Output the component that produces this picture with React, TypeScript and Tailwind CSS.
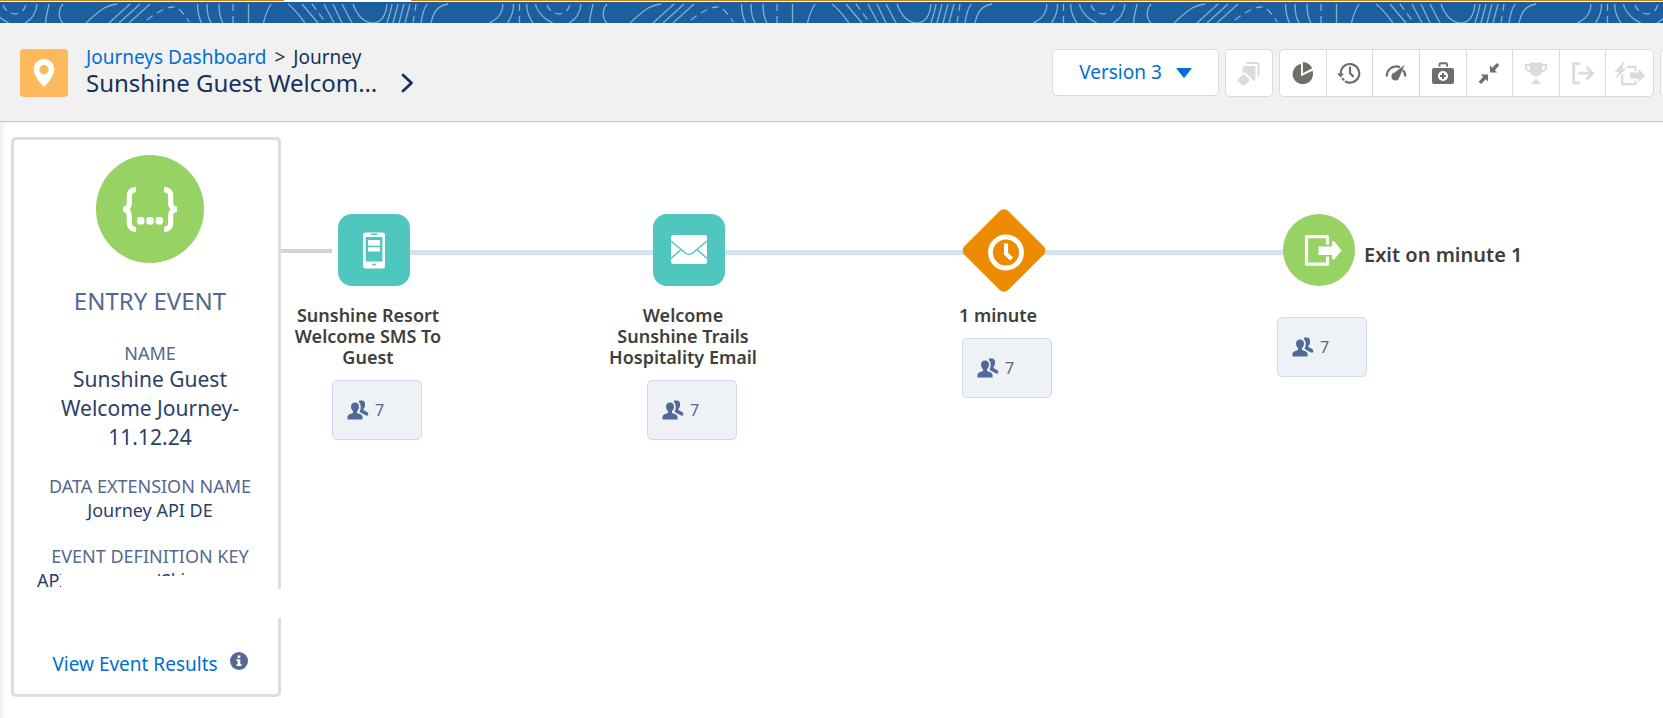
import type { ReactNode } from "react";

const contourLines = [
  "M2 4C2 12 -3 19 -12 23",
  "M546 4C546 12 541 19 532 23",
  "M12.5 4C12.5 12 10 18 6.5 23",
  "M25.5 4C26 12 28 18 32 23",
  "M34.5 4C36 12 44 20 52 23",
  "M80 4C79 14 74 20 68 23",
  "M92 4C91 10 89 15 88.500 23",
  "M106 4C101 10 101 18 106 23",
  "M160 4C150 5 145 8 129 23",
  "M173 4L152 23",
  "M183 4L162 23",
  "M193 4L172 23",
  "M240.500 4C240.500 12 242 18 244.500 23",
  "M250 4C250 12 251 18 254 23",
  "M262 4C262 12 263 18 266 23",
  "M291.500 4V23",
  "M314 4C310 10 308 16 306.500 23",
  "M331 4C338 9 342 15 348 23",
  "M345 4C350 10 355 16 361 23",
  "M367 4L377 23",
  "M376 4L385 23",
  "M385 4L395 23",
  "M396 4C400 16 408 23 415 23C425 23 429 14 430 4",
  "M435 4C434 12 431 18 430 23",
  "M441 4L436 23",
  "M447 4L442 23",
  "M453 4L448 23",
  "M470 4C466 10 465 16 464 23",
  "M491 4C479 6 476 14 474 23",
];

const dashedContours = [
  "M18.500 4V23",
  "M46 5C50 16 66 18 69 4",
  "M190 20C200 12 210 7 216 7C222 7 227 14 232 22",
  "M276 4V23",
  "M355 4L369 23",
  "M459 4L456 23",
];

function ContourBand() {
  return (
    <div className="h-[21px] bg-[#1b5f9f]">
      <svg className="block h-full w-full" aria-hidden="true">
        <defs>
          <pattern
            id="contours"
            width="544"
            height="23"
            patternUnits="userSpaceOnUse"
            patternTransform="translate(-43 -2)"
          >
            <g fill="none" stroke="#86adcf" strokeWidth="1.300">
              {contourLines.map((d) => (
                <path key={d} d={d} />
              ))}
              {dashedContours.map((d) => (
                <path key={d} d={d} strokeDasharray="7 5" />
              ))}
            </g>
          </pattern>
        </defs>
        <rect width="100%" height="100%" fill="url(#contours)" />
      </svg>
    </div>
  );
}

function ToolIcon({ children }: { children: ReactNode }) {
  return (
    <svg width="24" height="24" viewBox="0 0 24 24" fill="currentColor" aria-hidden="true">
      {children}
    </svg>
  );
}

const tools = [
  {
    label: "Journey analytics",
    disabled: false,
    icon: (
      <ToolIcon>
        <path d="M10 3A10.200 10.200 0 1 0 21.500 9.800L10 15.300Z" />
        <path d="M11.900 1A11 11 0 0 1 21.200 7.200L11.900 12.300Z" />
      </ToolIcon>
    ),
  },
  {
    label: "History",
    disabled: false,
    icon: (
      <ToolIcon>
        <path
          d="M3.700 13.500A9.300 9.300 0 1 1 8 20.200"
          fill="none"
          stroke="currentColor"
          strokeWidth="2.200"
        />
        <path d="M0.200 12.500H7L3.700 16.500Z" />
        <path d="M4.200 17.600L6 16.400L7.800 18.800L6.200 20Z" />
        <path
          d="M13 6.500V12L16 15.300"
          fill="none"
          stroke="currentColor"
          strokeWidth="2.200"
          strokeLinecap="round"
        />
      </ToolIcon>
    ),
  },
  {
    label: "Goal meter",
    disabled: false,
    icon: (
      <ToolIcon>
        <path
          d="M2.800 15.500A9.400 9.400 0 0 1 16 6.200M19 9A9.400 9.400 0 0 1 21.300 15.500"
          fill="none"
          stroke="currentColor"
          strokeWidth="2.300"
        />
        <path d="M20.600 3.800L15.300 16.500A4 4 0 1 1 10.800 11.500Z" />
      </ToolIcon>
    ),
  },
  {
    label: "Journey health",
    disabled: false,
    icon: (
      <ToolIcon>
        <path
          d="M8.500 5.500V3.500Q8.500 2.200 9.800 2.200H14.700Q16 2.200 16 3.500V5.500"
          fill="none"
          stroke="currentColor"
          strokeWidth="2"
        />
        <rect x="1" y="7" width="22" height="16" rx="2" />
        <circle cx="12" cy="15" r="5" fill="#fff" />
        <path d="M11 12H13V14H15V16H13V18H11V16H9V14H11Z" />
      </ToolIcon>
    ),
  },
  {
    label: "Zoom to fit",
    disabled: false,
    icon: (
      <ToolIcon>
        <path d="M13 4.500L15.200 6.700L20 2L22.300 4.300L17.800 9.200L20.200 11.600H13Z" />
        <path d="M11 20.500L8.800 18.300L4 23L1.700 20.700L6.200 15.800L3.800 13.400H11Z" />
      </ToolIcon>
    ),
  },
  {
    label: "Goals",
    disabled: true,
    icon: (
      <ToolIcon>
        <path d="M6 1.500H18V9Q18 14.500 12 15.500Q6 14.500 6 9Z" />
        <path
          d="M6 4H2V6Q2 10 7 10.500M18 4H22V6Q22 10 17 10.500"
          fill="none"
          stroke="currentColor"
          strokeWidth="2"
        />
        <path d="M10.800 18H13.200L14 20.300Q16.500 20.500 16.500 23H7.500Q7.500 20.500 10 20.300Z" />
      </ToolIcon>
    ),
  },
  {
    label: "Exit criteria",
    disabled: true,
    icon: (
      <ToolIcon>
        <g fill="none" stroke="currentColor" strokeWidth="2.800">
          <path d="M9 2.700H2.700V21.800H9" />
          <path d="M7 12.200H21.500M15.500 6L21.700 12.200L15.500 18.400" />
        </g>
      </ToolIcon>
    ),
  },
  {
    label: "Quick exit",
    disabled: true,
    icon: (
      <svg width="32" height="26" viewBox="0 0 32 26" fill="currentColor" aria-hidden="true">
        <path d="M11 0L0.500 12H5L1 19.500L12.500 8.500H8Z" />
        <path
          d="M13 6.800H21.500V11M21.500 20.500V24.200H8.300V14"
          fill="none"
          stroke="currentColor"
          strokeWidth="2.200"
        />
        <path d="M16 12.500H24.500V9L31.500 15.500L24.500 22V18.500H16Z" />
      </svg>
    ),
  },
];

function PageHeader() {
  return (
    <header className="relative z-10 flex h-[99px] items-center overflow-hidden border-b border-[#c4c4c4] bg-[#f1f1f1] pt-[2px] pl-5">
      <span className="flex size-12 shrink-0 items-center justify-center rounded-[4px] bg-[#fdb95b]">
        <svg width="22" height="30" viewBox="0 0 22 30" fill="#fff" aria-hidden="true">
          <path
            fillRule="evenodd"
            d="M11 1A10.300 10.300 0 0 1 21.300 11.500C21.300 17.500 15.500 24 11.800 28.300Q11 29.200 10.200 28.300C6.500 24 0.700 17.500 0.700 11.500A10.300 10.300 0 0 1 11 1ZM11 7A4.700 4.700 0 1 0 11 16.400A4.700 4.700 0 1 0 11 7Z"
          />
        </svg>
      </span>
      <div className="ml-[18px] shrink-0 pb-1">
        <nav aria-label="Breadcrumb" className="flex gap-2 text-[19px] leading-[24px] text-[#16325c]">
          <a href="#dashboard" className="text-[#0070d2]">
            Journeys Dashboard
          </a>
          <span className="text-[#333]">&gt;</span>
          <span>Journey</span>
        </nav>
        <div className="flex items-center gap-6">
          <h1 className="text-[24px] leading-[28px] text-[#16325c]">Sunshine Guest Welcom…</h1>
          <button type="button" aria-label="Expand journey name" className="text-[#16325c]">
            <svg width="13" height="20" viewBox="0 0 13 20" fill="none" aria-hidden="true">
              <path
                d="M2 2L10.500 10L2 18"
                stroke="currentColor"
                strokeWidth="2.800"
                strokeLinecap="round"
                strokeLinejoin="round"
              />
            </svg>
          </button>
        </div>
      </div>
      <div className="-mr-[45px] ml-auto flex shrink-0 gap-[6px] text-[#706e6b]">
        <button
          type="button"
          className="flex h-[47px] w-[167px] items-center justify-center gap-[14px] rounded-[5px] border border-[#dddbda] bg-white text-[19px] text-[#0070d2]"
        >
          Version 3
          <svg width="16" height="10" viewBox="0 0 16 10" fill="currentColor" aria-hidden="true">
            <path d="M0 0H16L8.600 9.400Q8 10 7.400 9.400Z" />
          </svg>
        </button>
        <button
          type="button"
          disabled
          aria-label="Copy"
          className="flex size-12 items-center justify-center rounded-[5px] border border-[#dddbda] bg-white text-[#dddbda]"
        >
          <ToolIcon>
            <path d="M9.500 1H21Q22.500 1 22.500 2.500V15.500H20.500V4Q20.500 3 19.500 3H9.500Z" />
            <path d="M7 5H17Q18.500 5 18.500 6.500V18Q18.500 19.500 17 19.500H15.500L14.500 17.500L8.500 11.500H5.500V6.500Q5.500 5 7 5Z" />
            <path d="M7.500 13.500L12.500 18.500Q13 19 12.500 19.500L8 24Q6.500 24.500 5 24L1.200 20.200Q0.500 19 1.200 18.200L6 13.500Q6.700 13 7.500 13.500Z" />
          </ToolIcon>
        </button>
        <div className="grid h-12 w-[375px] grid-cols-8 divide-x divide-[#dddbda] overflow-hidden rounded-[5px] border border-[#dddbda] bg-white">
          {tools.map((t) => (
            <button
              key={t.label}
              type="button"
              aria-label={t.label}
              disabled={t.disabled}
              className="flex items-center justify-center disabled:text-[#dddbda]"
            >
              {t.icon}
            </button>
          ))}
        </div>
        <button
          type="button"
          aria-label="More"
          className="size-12 rounded-[5px] border border-[#dddbda] bg-white"
        />
      </div>
    </header>
  );
}

function EntryCard() {
  return (
    <aside className="relative mt-[15px] ml-[11px] h-[560px] w-[270px] shrink-0 rounded-[5px] border-3 border-[#d8dde6] bg-white pt-[15px] pr-3 pl-5 text-center text-[#2b4168]">
      <div className="flex flex-col items-center">
        <span className="flex size-[108px] items-center justify-center rounded-full bg-[#97d264]">
          <svg width="54" height="45" viewBox="0 0 54 45" aria-hidden="true">
            <g fill="none" stroke="#fff" strokeWidth="5.200">
              <path d="M13 2.600H12Q6.300 3.500 6.300 9V16.500Q6.300 21 0.500 22.300Q6.300 23.500 6.300 28.500V36Q6.300 41.500 12 42.400H13" />
              <path d="M41 2.600H42Q47.700 3.500 47.700 9V16.500Q47.700 21 53.500 22.300Q47.700 23.500 47.700 28.500V36Q47.700 41.500 42 42.400H41" />
            </g>
            <g fill="#fff">
              <rect x="14" y="30" width="7.400" height="7.600" rx="2.800" />
              <rect x="23.300" y="30" width="7.400" height="7.600" rx="2.800" />
              <rect x="32.600" y="30" width="7.400" height="7.600" rx="2.800" />
            </g>
          </svg>
        </span>
        <h2 className="mt-[22px] text-[24px] leading-[32px] text-[#54698d]">ENTRY EVENT</h2>
        <dl className="text-[18px] leading-[24px]">
          <dt className="mt-6 text-[#54698d]">NAME</dt>
          <dd className="text-[21px] leading-[29px]">
            Sunshine Guest
            <br />
            Welcome Journey-
            <br />
            11.12.24
          </dd>
          <dt className="mt-[22px] text-[#54698d]">DATA EXTENSION NAME</dt>
          <dd>Journey API DE</dd>
          <dt className="mt-[22px] text-[#54698d]">EVENT DEFINITION KEY</dt>
          <dd className="-ml-3 flex text-left">
            <span className="h-6 w-6 overflow-hidden">API</span>
            <span className="ml-[96px] h-[8px] overflow-hidden">'Ski</span>
          </dd>
        </dl>
        <div className="mt-[60px] flex gap-3">
          <a href="#results" className="text-[19px] leading-[24px] text-[#0070d2]">
            View Event Results
          </a>
          <svg width="18" height="18" viewBox="0 0 18 18" aria-hidden="true">
            <circle cx="9" cy="9" r="9" fill="#54698d" />
            <path d="M7.600 3.500H10.300V6H7.600ZM6.500 7.300H10.300V12.300H11.500V14H6.500V12.300H7.600V9H6.500Z" fill="#fff" />
          </svg>
        </div>
      </div>
      <span className="absolute top-[449px] -right-[3px] h-[29px] w-[3px] bg-white" />
    </aside>
  );
}

function CountBox() {
  return (
    <div className="mt-3 ml-[6px] flex h-[60px] w-[90px] items-center gap-[6px] rounded-[5px] border border-[#d0d9ee] bg-[#eef1f6] pl-[14px] text-[16px] text-[#54698d]">
      <svg width="22" height="20" viewBox="0 0 22 20" fill="#4f6a95" aria-hidden="true">
        <path d="M12.300 0.500H15Q18 0.500 18 4V5.500Q18 7.500 16.500 8.700V10L20.500 12.300Q22 13.500 21 15.500H19Q16.500 14.200 13.500 12.500L12.600 11.500Q14 9 13.700 6Q13.500 3.200 11.700 2Z" />
        <path d="M8 2.500Q12 2.700 12 7Q12 9.700 10 11.300V13L14 14.500Q16 15.500 15.500 19.500H0.500Q0 15.500 2 14.500L6 13V11.300Q4 9.700 4 7Q4 2.700 8 2.500Z" />
      </svg>
      <span>7</span>
    </div>
  );
}

const nodes = [
  {
    place: "left-[12px]",
    label: ["Sunshine Resort", "Welcome SMS To", "Guest"],
    icon: (
      <svg width="72" height="72" viewBox="0 0 72 72" aria-hidden="true">
        <rect width="72" height="72" rx="14" fill="#4fc7bf" />
        <rect x="25" y="18.500" width="22" height="36" rx="2.500" fill="#fff" />
        <rect x="27.700" y="23" width="16.700" height="24.500" fill="#4fc7bf" />
        <path d="M33 20.300H39M34 50.500H38" stroke="#4fc7bf" strokeWidth="1.600" />
        <rect x="30" y="26" width="12" height="5.700" rx="0.500" fill="#fff" />
        <rect x="30" y="33.300" width="12" height="4.300" rx="0.500" fill="#fff" />
      </svg>
    ),
  },
  {
    place: "left-[327px]",
    label: ["Welcome", "Sunshine Trails", "Hospitality Email"],
    icon: (
      <svg width="72" height="72" viewBox="0 0 72 72" aria-hidden="true">
        <rect width="72" height="72" rx="14" fill="#4fc7bf" />
        <rect x="18" y="21" width="36" height="29" rx="2.500" fill="#fff" />
        <g fill="none" stroke="#4fc7bf" strokeWidth="1.500">
          <path d="M18 27L33 39.500Q36 41.500 39 39.500L54 27" />
          <path d="M18 44.500L28 35.500M54 44.500L44 35.500" />
        </g>
      </svg>
    ),
  },
  {
    place: "left-[642px]",
    label: ["1 minute"],
    icon: (
      <svg width="72" height="72" viewBox="0 0 72 72" className="overflow-visible" aria-hidden="true">
        <rect x="5" y="5.500" width="62" height="62" rx="6" fill="#ed8b00" transform="rotate(45 36 36.500)" />
        <circle cx="38" cy="38.500" r="15.500" fill="none" stroke="#fff" strokeWidth="4.800" />
        <path d="M38 29.500V39.500L43.500 45" fill="none" stroke="#fff" strokeWidth="4.200" />
      </svg>
    ),
  },
  {
    place: "left-[957px]",
    label: [],
    icon: (
      <svg width="72" height="72" viewBox="0 0 72 72" aria-hidden="true">
        <circle cx="36" cy="36" r="36" fill="#97d264" />
        <path
          d="M44.500 30.500V22.700H23.500V50.200H44.500V42.500"
          fill="none"
          stroke="#fff"
          strokeWidth="3.200"
          strokeLinejoin="round"
        />
        <path d="M35.500 32.500H49V27.500L51 27L58.500 36.500L51 45.700L49 45V41H35.500Z" fill="#fff" />
      </svg>
    ),
  },
];

function JourneyCanvas() {
  return (
    <section aria-label="Journey" className="relative flex-1">
      <div className="absolute top-[127px] left-0 h-1 w-[51px] bg-[#d3d3d3]" />
      <div className="absolute top-[128px] left-[93px] h-[5px] w-[909px] bg-[#d5e1ef]" />
      {nodes.map((n) => (
        <div key={n.place} className={`absolute top-[92px] flex w-[150px] flex-col items-center ${n.place}`}>
          <div className="ml-3">{n.icon}</div>
          <div className="mt-[19px] text-center text-[18px] leading-[21px] font-semibold whitespace-nowrap text-[#3e3e3c]">
            {n.label.map((line) => (
              <div key={line}>{line}</div>
            ))}
          </div>
          <div className="ml-3">
            <CountBox />
          </div>
        </div>
      ))}
      <p className="absolute top-[120px] left-[1083px] text-[20px] leading-[26px] font-semibold whitespace-nowrap text-[#3e3e3c]">
        Exit on minute 1
      </p>
    </section>
  );
}

export default function App() {
  return (
    <div className="flex min-h-screen flex-col overflow-hidden bg-white font-['Noto_Sans','Open_Sans',sans-serif]">
      <div className="flex h-[2px]">
        <span className="h-px w-[284px] bg-[#dd7a01]" />
        <span className="h-px w-[127px] bg-white" />
        <span className="h-px flex-1 bg-[#dd7a01]" />
      </div>
      <ContourBand />
      <PageHeader />
      <main className="flex flex-1 bg-white shadow-[inset_5px_3px_5px_-3px_#ececec]">
        <EntryCard />
        <JourneyCanvas />
      </main>
    </div>
  );
}
